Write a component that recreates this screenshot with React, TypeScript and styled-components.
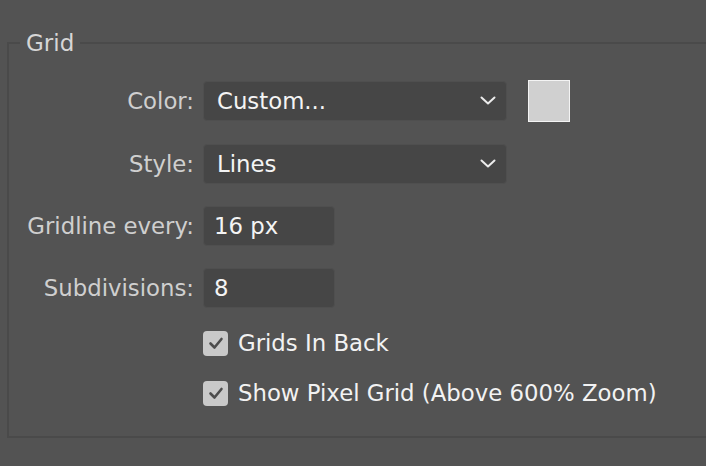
import React from "react"
import styled, { createGlobalStyle } from "styled-components"

const GlobalStyle = createGlobalStyle`
  html, body {
    margin: 0;
    padding: 0;
    background: #535353;
  }
  body {
    font-family: "DejaVu Sans", Verdana, sans-serif;
  }
`

const Chevron = () => (
  <svg width="16" height="10" viewBox="0 0 16 10">
    <polyline points="1.5,1.5 8,7.5 14.5,1.5" fill="none" stroke="#ececec" strokeWidth="2" strokeLinecap="round" strokeLinejoin="round" />
  </svg>
)

const Check = () => (
  <svg width="18" height="18" viewBox="0 0 18 18">
    <polyline points="3.5,9.5 7.5,13.5 14.5,5" fill="none" stroke="#4d4d4d" strokeWidth="2.6" strokeLinecap="round" strokeLinejoin="round" />
  </svg>
)

const App: React.FC = () => {
  return (
    <Page>
      <GlobalStyle />
      <Group>
        <Legend>Grid</Legend>
        <Form>
          <Label>Color:</Label>
          <FieldRow>
            <Select $width={304}>
              <span>Custom...</span>
              <Chevron />
            </Select>
            <Swatch />
          </FieldRow>

          <Label>Style:</Label>
          <FieldRow>
            <Select $width={304}>
              <span>Lines</span>
              <Chevron />
            </Select>
          </FieldRow>

          <Label>Gridline every:</Label>
          <FieldRow>
            <Input $width={132}>16 px</Input>
          </FieldRow>

          <Label>Subdivisions:</Label>
          <FieldRow>
            <Input $width={132}>8</Input>
          </FieldRow>
        </Form>
        <Checks>
          <CheckRow>
            <Box><Check /></Box>
            <CheckText>Grids In Back</CheckText>
          </CheckRow>
          <CheckRow>
            <Box><Check /></Box>
            <CheckText>Show Pixel Grid (Above 600% Zoom)</CheckText>
          </CheckRow>
        </Checks>
      </Group>
    </Page>
  )
}

export default App

const Page = styled.div`
  min-height: 466px;
  padding-top: 30px;
  box-sizing: border-box;
  background: #535353;
  overflow: hidden;
`

const Group = styled.fieldset`
  margin: 0 0 0 7px;
  padding: 24px 0 23px 0;
  border: 2px solid #4a4a4a;
  border-right: none;
  min-width: 0;
`

const Legend = styled.legend`
  margin-left: 11px;
  padding: 0 6px;
  font-size: 23px;
  line-height: 26px;
  color: #d6d6d6;
`

const Form = styled.div`
  display: grid;
  grid-template-columns: 185px auto;
  column-gap: 9px;
  row-gap: 22px;
  align-items: center;
`

const Label = styled.div`
  text-align: right;
  font-size: 22.8px;
  color: #cfcfcf;
  white-space: nowrap;
`

const FieldRow = styled.div`
  display: flex;
  align-items: center;
  gap: 21px;
`

const fieldBase = `
  box-sizing: border-box;
  height: 40px;
  display: flex;
  align-items: center;
  background: #464646;
  border: 1px solid #4f4f4f;
  border-radius: 4px;
  color: #f4f4f4;
  font-size: 22.8px;
  padding: 0 10px 0 13px;
`

const Select = styled.div<{ $width: number }>`
  ${fieldBase}
  width: ${(p) => p.$width}px;
  justify-content: space-between;
`

const Input = styled.div<{ $width: number }>`
  ${fieldBase}
  width: ${(p) => p.$width}px;
  padding-left: 10px;
`

const Swatch = styled.div`
  width: 42px;
  height: 42px;
  box-sizing: border-box;
  background: #d0d0d0;
  border: 1px solid #f4f4f4;
`

const Checks = styled.div`
  display: flex;
  flex-direction: column;
  gap: 10px;
  margin-top: 15px;
  padding-left: 194px;
`

const CheckRow = styled.div`
  height: 40px;
  display: flex;
  align-items: center;
  gap: 10px;
`

const Box = styled.div`
  width: 25px;
  height: 25px;
  border-radius: 4px;
  background: #c9c9c9;
  display: flex;
  align-items: center;
  justify-content: center;
`

const CheckText = styled.span`
  font-size: 22.8px;
  color: #f2f2f2;
  white-space: nowrap;
`
